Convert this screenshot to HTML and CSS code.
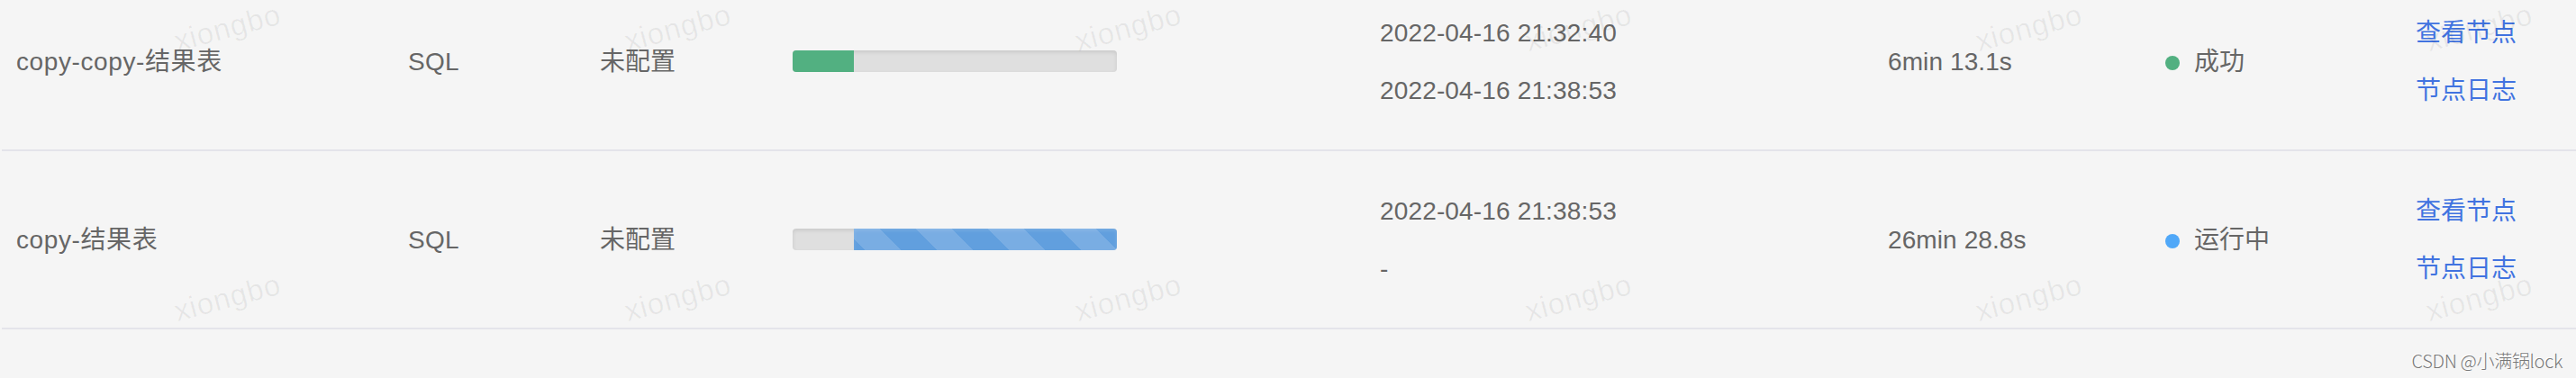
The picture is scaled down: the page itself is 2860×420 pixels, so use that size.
FILE: index.html
```html
<!DOCTYPE html>
<html lang="zh-CN">
<head>
    <meta charset="UTF-8">
    <title>节点列表</title>
    <link rel="stylesheet" href="styles.css">
</head>
<body>
    <div class="page">
        <div class="node-list">
            <div class="row">
                <div class="cell name">copy-copy-结果表</div>
                <div class="cell type">SQL</div>
                <div class="cell config">未配置</div>
                <div class="cell gantt">
                    <div class="progress">
                        <div class="bar success" style="width: 68px"></div>
                    </div>
                </div>
                <div class="cell time">
                    <p>2022-04-16 21:32:40</p>
                    <p>2022-04-16 21:38:53</p>
                </div>
                <div class="cell duration">6min 13.1s</div>
                <div class="cell status"><i class="dot success"></i>成功</div>
                <div class="cell actions">
                    <a>查看节点</a>
                    <a>节点日志</a>
                </div>
            </div>
            <div class="row">
                <div class="cell name">copy-结果表</div>
                <div class="cell type">SQL</div>
                <div class="cell config">未配置</div>
                <div class="cell gantt">
                    <div class="progress">
                        <div class="bar running" style="margin-left: 68px; width: 292px"></div>
                    </div>
                </div>
                <div class="cell time">
                    <p>2022-04-16 21:38:53</p>
                    <p>-</p>
                </div>
                <div class="cell duration">26min 28.8s</div>
                <div class="cell status"><i class="dot running"></i>运行中</div>
                <div class="cell actions">
                    <a>查看节点</a>
                    <a>节点日志</a>
                </div>
            </div>
        </div>
        <div class="watermark">
            <span>xiongbo</span><span>xiongbo</span><span>xiongbo</span><span>xiongbo</span><span>xiongbo</span><span>xiongbo</span>
            <span>xiongbo</span><span>xiongbo</span><span>xiongbo</span><span>xiongbo</span><span>xiongbo</span><span>xiongbo</span>
        </div>
        <div class="credit">CSDN @小满锅lock</div>
    </div>
</body>
</html>
```

FILE: styles.css
```css
body {
    margin: 0;
    background: #f5f5f5;
    font-family: "Liberation Sans", "Noto Sans CJK SC", sans-serif;
    font-size: 28px;
    color: #666;
}
.page {
    position: relative;
    height: 420px;
    overflow: hidden;
}
.node-list {
    margin: -30px 0 0 2px;
}
.row {
    display: flex;
    align-items: center;
    height: 196px;
    border-bottom: 2px solid #e4e4ea;
    white-space: nowrap;
}
.cell {
    flex: none;
    box-sizing: border-box;
    padding-top: 2px;
    padding-left: 16px;
    line-height: 64px;
}
.name {
    width: 435px;
    letter-spacing: 0.6px;
}
.type {
    width: 213px;
    letter-spacing: 0.3px;
}
.config {
    width: 212px;
}
.gantt {
    width: 653px;
    padding-top: 0;
    padding-left: 18px;
}
.time {
    width: 564px;
    padding-left: 17px;
    letter-spacing: 0.15px;
}
.duration {
    width: 307px;
    padding-left: 17px;
    letter-spacing: 0.1px;
}
.status {
    display: flex;
    align-items: center;
    width: 280px;
    padding-left: 18px;
}
.time p {
    margin: 0;
}
.actions a {
    display: block;
    color: #4173e0;
}
.progress {
    width: 360px;
    height: 24px;
    border-radius: 4px;
    background: #dfdfdf;
    box-shadow: inset 0 2px 4px rgba(0,0,0,0.1);
    overflow: hidden;
}
.bar {
    height: 100%;
}
.bar.success {
    background: #52b081;
}
.bar.running {
    background-color: #619fde;
    background-image: linear-gradient(45deg, rgba(255,255,255,0.15) 25%, transparent 25%, transparent 50%, rgba(255,255,255,0.15) 50%, rgba(255,255,255,0.15) 75%, transparent 75%, transparent);
    background-size: 80px 80px;
    background-position: -11px 0;
    box-shadow: inset 0 2px 4px rgba(255,255,255,0.15);
}
.dot {
    width: 16px;
    height: 16px;
    margin: 2px 16px 0 0;
    border-radius: 50%;
}
.dot.success {
    background: #52b081;
}
.dot.running {
    background: #50a8f8;
}
/* 水印平铺 */
.watermark {
    position: absolute;
    top: 18px;
    left: 192px;
    display: grid;
    grid-template-columns: repeat(6, 500px);
    grid-auto-rows: 300px;
    pointer-events: none;
}
.watermark span {
    justify-self: start;
    align-self: start;
    font-size: 33px;
    line-height: 26px;
    letter-spacing: 0.8px;
    color: rgba(0,0,0,0.06);
    transform: rotate(-15deg);
}
.credit {
    position: absolute;
    right: 15px;
    bottom: 6px;
    font-family: "Noto Sans CJK SC", sans-serif;
    font-size: 20px;
    font-weight: 300;
    line-height: 26px;
    letter-spacing: -0.3px;
    color: #777;
    text-shadow: -1px -1px 0 #fff;
}
```
